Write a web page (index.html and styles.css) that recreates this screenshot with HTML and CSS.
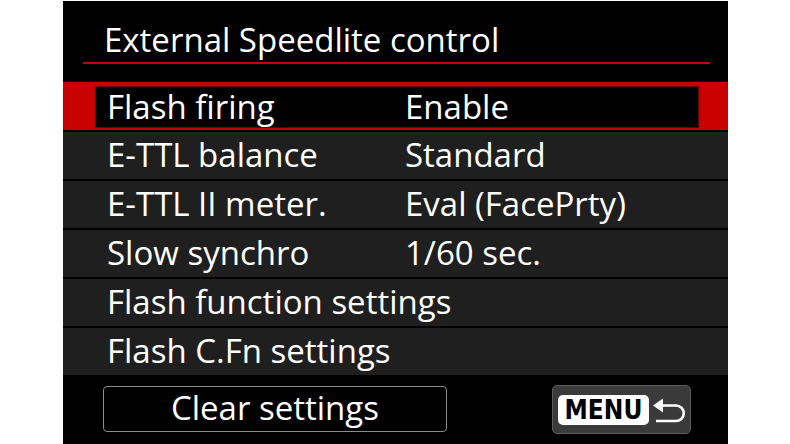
FILE: index.html
```html
<!DOCTYPE html>
<html lang="en">

<head>
    <meta charset="UTF-8">
    <title>External Speedlite control</title>
    <link rel="stylesheet" href="styles.css">
</head>

<body>
    <div class="screen">
        <div class="title">
            <div class="title-text">External Speedlite control</div>
        </div>

        <ul class="menu">
            <li class="item active">
                <div class="cursor">
                    <span class="label">Flash firing</span>
                    <span class="value">Enable</span>
                </div>
            </li>
            <li class="item">
                <span class="label">E-TTL balance</span>
                <span class="value">Standard</span>
            </li>
            <li class="item">
                <span class="label">E-TTL II meter.</span>
                <span class="value">Eval (FacePrty)</span>
            </li>
            <li class="item">
                <span class="label">Slow synchro</span>
                <span class="value">1/60 sec.</span>
            </li>
            <li class="item">
                <span class="label">Flash function settings</span>
            </li>
            <li class="item">
                <span class="label">Flash C.Fn settings</span>
            </li>
        </ul>

        <div class="footer">
            <div class="clear-btn">Clear settings</div>
            <div class="menu-btn">
                <span class="menu-key">MENU</span>
                <svg class="back" width="34" height="30" viewBox="0 0 34 30">
                    <polygon points="0,10.5 10,3.5 10,17.5" fill="#fff" />
                    <path d="M9 10.5 H23 A7.75 7.75 0 0 1 23 26 H3" fill="none" stroke="#fff" stroke-width="2.6" />
                </svg>
            </div>
        </div>
    </div>
</body>

</html>
```

FILE: styles.css
```css
body {
    margin: 0;
    background: #fff;
    font-family: "Open Sans", "Noto Sans", sans-serif;
    color: #fff;
}

.screen {
    width: 665px;
    height: 443px;
    margin: 1px 0 0 63px;
    background: #000;
    overflow: hidden;
}

/* heading with the red rule under it */
.title {
    height: 80px;
    padding: 0 18px 0 20px;
    border-bottom: 1px solid #111;
}

.title-text {
    padding: 19px 0 2px 21px;
    font-size: 33px;
    line-height: 40px;
    border-bottom: 2px solid #c80000;
}

.menu {
    list-style: none;
    margin: 0;
    padding: 0;
    display: flex;
    flex-direction: column;
    gap: 2px;
}

.item {
    display: flex;
    height: 45px;
    padding: 0 0 2px 44px;
    background: #1f1f1f;
    font-size: 33px;
    line-height: 45px;
    white-space: nowrap;
}

.label {
    width: 298px;
}

/* selected row: red band with a black cursor box */
.item.active {
    height: 48px;
    padding: 4px 29px 2px 32px;
    box-sizing: border-box;
    background: #c80000;
    line-height: 40px;
}

.cursor {
    display: flex;
    flex: 1;
    height: 42px;
    box-sizing: border-box;
    padding-left: 11px;
    background: #000;
    border: 1px solid #5a0000;
}

.footer {
    display: flex;
    justify-content: space-between;
    align-items: flex-start;
    padding: 10px 37px 0 40px;
}

.clear-btn {
    width: 344px;
    height: 46px;
    margin-top: 1px;
    box-sizing: border-box;
    border: 1px solid #8c8c8c;
    border-radius: 4px;
    text-align: center;
    font-size: 33px;
    line-height: 42px;
}

.menu-btn {
    display: flex;
    align-items: center;
    width: 139px;
    height: 49px;
    box-sizing: border-box;
    padding-left: 5px;
    gap: 4px;
    background: #3a3a3a;
    border: 1px solid #5c5c5c;
    border-radius: 5px;
}

.menu-key {
    width: 91px;
    height: 30px;
    background: #fff;
    border-radius: 5px;
    color: #000;
    font-family: "DejaVu Sans Condensed", "DejaVu Sans", sans-serif;
    font-weight: bold;
    font-size: 26px;
    line-height: 31px;
    text-align: center;
}

.back {
    display: block;
}
```
